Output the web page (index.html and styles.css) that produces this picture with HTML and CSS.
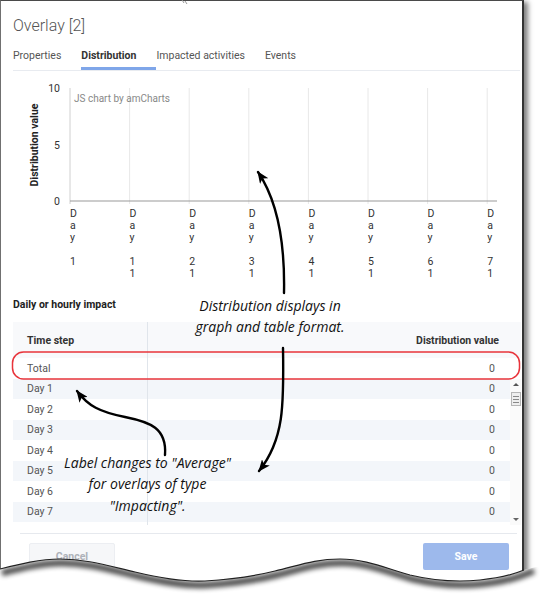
FILE: index.html
```html
<!DOCTYPE html>
<html>
<head>
<meta charset="utf-8">
<link rel="stylesheet" href="styles.css">
</head>
<body>
<div class="frame">
  <h1 class="title">Overlay [2]</h1>
  <nav class="tabs">
    <span class="tab">Properties</span>
    <span class="tab active">Distribution</span>
    <span class="tab">Impacted activities</span>
    <span class="tab">Events</span>
  </nav>
  <svg class="chart" viewBox="1 71 521 219" width="521" height="219">
    <g class="grid-lines">
      <line x1="129.6" y1="88" x2="129.6" y2="204"/>
      <line x1="189.2" y1="88" x2="189.2" y2="204"/>
      <line x1="248.8" y1="88" x2="248.8" y2="204"/>
      <line x1="308.4" y1="88" x2="308.4" y2="204"/>
      <line x1="368" y1="88" x2="368" y2="204"/>
      <line x1="427.6" y1="88" x2="427.6" y2="204"/>
      <line x1="487.2" y1="88" x2="487.2" y2="204"/>
    </g>
    <line class="y-axis" x1="70" y1="88" x2="70" y2="204"/>
    <line class="x-axis" x1="70" y1="201" x2="497" y2="201"/>
    <text class="credit" x="74" y="101.5">JS chart by amCharts</text>
    <text class="ytick" x="60" y="92">10</text>
    <text class="ytick" x="60" y="148.5">5</text>
    <text class="ytick" x="60" y="204.5">0</text>
    <text class="ytitle" x="34" y="145" transform="rotate(-90 34 145)">Distribution value</text>
    <g class="xlab">
      <text x="70" y="217">D</text><text x="70" y="229">a</text><text x="70" y="241">y</text><text x="70" y="265">1</text>
      <text x="129.6" y="217">D</text><text x="129.6" y="229">a</text><text x="129.6" y="241">y</text><text x="129.6" y="265">1</text><text x="129.6" y="277">1</text>
      <text x="189.2" y="217">D</text><text x="189.2" y="229">a</text><text x="189.2" y="241">y</text><text x="189.2" y="265">2</text><text x="189.2" y="277">1</text>
      <text x="248.8" y="217">D</text><text x="248.8" y="229">a</text><text x="248.8" y="241">y</text><text x="248.8" y="265">3</text><text x="248.8" y="277">1</text>
      <text x="308.4" y="217">D</text><text x="308.4" y="229">a</text><text x="308.4" y="241">y</text><text x="308.4" y="265">4</text><text x="308.4" y="277">1</text>
      <text x="368" y="217">D</text><text x="368" y="229">a</text><text x="368" y="241">y</text><text x="368" y="265">5</text><text x="368" y="277">1</text>
      <text x="427.6" y="217">D</text><text x="427.6" y="229">a</text><text x="427.6" y="241">y</text><text x="427.6" y="265">6</text><text x="427.6" y="277">1</text>
      <text x="487.2" y="217">D</text><text x="487.2" y="229">a</text><text x="487.2" y="241">y</text><text x="487.2" y="265">7</text><text x="487.2" y="277">1</text>
    </g>
  </svg>
  <div class="section-label">Daily or hourly impact</div>
  <div class="table">
    <div class="thead"><div class="c1">Time step</div><div class="c2">Distribution value</div></div>
    <div class="row total"><div class="c1">Total</div><div class="c2">0</div></div>
    <div class="tbody">
      <div class="rows">
        <div class="row"><div class="c1">Day 1</div><div class="c2">0</div></div>
        <div class="row"><div class="c1">Day 2</div><div class="c2">0</div></div>
        <div class="row"><div class="c1">Day 3</div><div class="c2">0</div></div>
        <div class="row"><div class="c1">Day 4</div><div class="c2">0</div></div>
        <div class="row"><div class="c1">Day 5</div><div class="c2">0</div></div>
        <div class="row"><div class="c1">Day 6</div><div class="c2">0</div></div>
        <div class="row"><div class="c1">Day 7</div><div class="c2">0</div></div>
        <div class="row"><div class="c1">Day 8</div><div class="c2">0</div></div>
      </div>
      <div class="scrollbar">
        <div class="sb-up"></div>
        <div class="sb-thumb"><span></span><span></span><span></span></div>
        <div class="sb-down"></div>
      </div>
    </div>
  </div>
  <div class="footer">
    <button class="btn cancel">Cancel</button>
    <button class="btn save">Save</button>
  </div>
</div>

<svg class="annot" width="540" height="599" viewBox="0 0 540 599">
  <defs>
    <marker id="ah" viewBox="0 0 12 10" refX="11" refY="5" markerWidth="12" markerHeight="10" markerUnits="userSpaceOnUse" orient="auto">
      <path d="M0,0 L12,5 L0,10 L3,5 z" class="ahead"/>
    </marker>
  </defs>
  <path class="cursor" d="M182,0 L184,3 M185,1 L187,4"/>
  <rect class="callout" x="12.5" y="352" width="507" height="27" rx="11" ry="11"/>
  <path class="arrow" d="M284,293 C285,245 279,203 258,172" marker-end="url(#ah)"/>
  <path class="arrow" d="M283,348 C284,405 284,440 259,471" marker-end="url(#ah)"/>
  <path class="arrow" d="M165,455 C167,428 150,422 125,417 C100,412 88,406 77,391" marker-end="url(#ah)"/>
  <text class="note" x="270" y="311">Distribution displays in</text>
  <text class="note" x="270" y="332">graph and table format.</text>
  <text class="note" x="147.5" y="467.5">Label changes to "Average"</text>
  <text class="note" x="147.5" y="489">for overlays of type</text>
  <text class="note" x="147.5" y="511">"Impacting".</text>
</svg>

<svg class="tear" width="540" height="599" viewBox="0 0 540 599">
  <defs>
    <clipPath id="below">
      <path d="M0,569 C20,564 40,559 60,559 C85,559 105,565 135,572 C160,578 185,582 205,581 C235,579 255,576 275,571 C300,565 315,559 340,559 C365,559 385,568 410,575 C435,581 460,582 480,580 C500,578 512,575 524,570 L540,566 L540,599 L0,599 Z"/>
    </clipPath>
    <filter id="blur" x="-5%" y="-50%" width="110%" height="200%">
      <feGaussianBlur stdDeviation="2.6"/>
    </filter>
  </defs>
  <path class="paper" d="M0,569 C20,564 40,559 60,559 C85,559 105,565 135,572 C160,578 185,582 205,581 C235,579 255,576 275,571 C300,565 315,559 340,559 C365,559 385,568 410,575 C435,581 460,582 480,580 C500,578 512,575 524,570 L540,566 L540,599 L0,599 Z"/>
  <g clip-path="url(#below)">
    <path class="tear-shadow" filter="url(#blur)" transform="translate(2,4)" d="M0,569 C20,564 40,559 60,559 C85,559 105,565 135,572 C160,578 185,582 205,581 C235,579 255,576 275,571 C300,565 315,559 340,559 C365,559 385,568 410,575 C435,581 460,582 480,580 C500,578 512,575 524,570 L532,567"/>
  </g>
  <path class="tear-line" d="M0,569 C20,564 40,559 60,559 C85,559 105,565 135,572 C160,578 185,582 205,581 C235,579 255,576 275,571 C300,565 315,559 340,559 C365,559 385,568 410,575 C435,581 460,582 480,580 C500,578 512,575 524,570"/>
</svg>
</body>
</html>
```

FILE: styles.css
```css
* { box-sizing: border-box; }
html, body { margin: 0; padding: 0; }
body {
  width: 540px;
  height: 599px;
  overflow: hidden;
  position: relative;
  background: #fff;
  font-family: Roboto, "Liberation Sans", sans-serif;
}

.frame {
  width: 524px;
  height: 599px;
  background: #fff;
  border-top: 1px solid #4a4a4a;
  border-left: 1px solid #707070;
  border-right: 2px solid #333;
  box-shadow: 4px 2px 5px rgba(0, 0, 0, 0.5);
}

.title {
  margin: 0;
  padding: 14px 0 0 12px;
  font-size: 16px;
  line-height: 22px;
  font-weight: 300;
  color: #555;
}

.tabs {
  display: flex;
  margin: 0 2px 0 12px;
  border-bottom: 1px solid #e8ebf0;
  font-size: 10.5px;
}
.tab {
  padding: 11px 20px 3px 0;
  line-height: 16px;
  border-bottom: 3px solid transparent;
  color: #555;
}
.tab.active {
  font-weight: 700;
  color: #333;
  border-bottom-color: #7fa6e9;
}

.chart { display: block; }
.grid-lines line { stroke: #e8e8e8; stroke-width: 1; }
.y-axis { stroke: #d0d0d0; stroke-width: 1; }
.x-axis { stroke: #999; stroke-width: 1; }
.credit { font-size: 10px; fill: #888; }
.ytick { font-size: 10.5px; fill: #333; text-anchor: end; }
.ytitle { font-size: 10.5px; font-weight: 700; fill: #222; text-anchor: middle; dominant-baseline: central; }
.xlab text { font-size: 10.5px; fill: #333; }

.section-label {
  margin: 7px 0 0 12px;
  font-size: 10.5px;
  line-height: 16px;
  font-weight: 700;
  color: #222;
}

.table {
  margin: 9px 0 0 12px;
  width: 508px;
  font-size: 10.5px;
}
.thead {
  display: flex;
  height: 36px;
  background: #f8f9fb;
  font-weight: 700;
  color: #333;
}
.c1 {
  width: 135px;
  padding-left: 14px;
  border-right: 1px solid #e0e5eb;
  display: flex;
  align-items: center;
}
.c2 {
  flex: 1;
  display: flex;
  align-items: center;
  justify-content: flex-end;
  padding-right: 15px;
}
.thead .c2 { padding-right: 22px; }
.row {
  display: flex;
  height: 20.5px;
  color: #555;
}
.row.total { width: 497px; }
.tbody {
  display: flex;
  height: 146.5px;
  overflow: hidden;
}
.rows { width: 497px; }
.rows .row:nth-child(odd) { background: #f3f6fa; }

.scrollbar {
  width: 11px;
  background: #fafafa;
  display: flex;
  flex-direction: column;
  align-items: center;
}
.sb-up {
  width: 0; height: 0;
  margin-top: 4px;
  border-left: 3px solid transparent;
  border-right: 3px solid transparent;
  border-bottom: 3px solid #555;
}
.sb-thumb {
  margin-top: 6.5px;
  width: 10px;
  height: 14px;
  border: 1px solid #b5b5b5;
  background: #eeeeee;
  display: flex;
  flex-direction: column;
  justify-content: center;
  align-items: center;
  gap: 2px;
}
.sb-thumb span { display: block; width: 6px; height: 1px; background: #888; }
.sb-down {
  width: 0; height: 0;
  margin-top: auto;
  margin-bottom: 4px;
  border-left: 3px solid transparent;
  border-right: 3px solid transparent;
  border-top: 3px solid #666;
}

.footer {
  margin: 8px 5px 0 19px;
  border-top: 1px solid #e6e9ee;
  padding: 9px 8px 0 9px;
  display: flex;
  justify-content: space-between;
}
.btn {
  width: 86px;
  height: 27px;
  border-radius: 2px;
  font-family: Roboto, "Liberation Sans", sans-serif;
  font-size: 10.5px;
  font-weight: 700;
  padding: 0;
}
.cancel { background: #f6f7f9; border: 1px solid #eceef2; color: #aeb2b9; }
.save { background: #9db9ec; border: none; color: #fff; }

.annot {
  position: absolute;
  left: 0; top: 0;
  pointer-events: none;
}
.cursor { stroke: #999; stroke-width: 1; fill: none; }
.callout { fill: none; stroke: #e8343b; stroke-width: 1.5; }
.arrow { fill: none; stroke: #000; stroke-width: 2.4; stroke-linecap: round; }
.ahead { fill: #000; }
.note {
  font-family: "Open Sans", "DejaVu Sans", sans-serif;
  font-style: italic;
  font-size: 14px;
  fill: #111;
  text-anchor: middle;
}

.tear {
  position: absolute;
  left: 0; top: 0;
  pointer-events: none;
}
.paper { fill: #fff; }
.tear-shadow { fill: none; stroke: #000; stroke-width: 6; opacity: 0.75; }
.tear-line { fill: none; stroke: #222; stroke-width: 1.2; }
```
